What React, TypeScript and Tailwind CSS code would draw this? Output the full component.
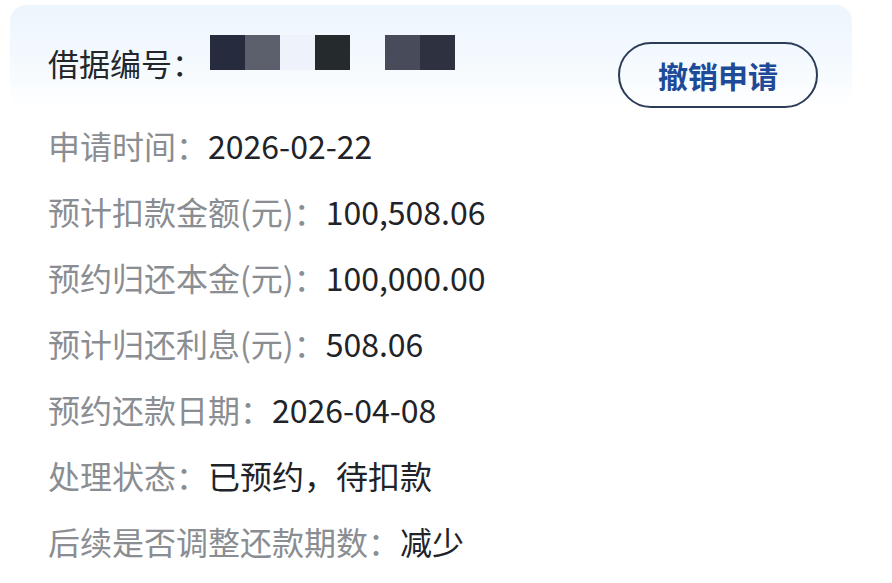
const rows: Array<{ label: string; value: string }> = [
  { label: '申请时间：', value: '2026-02-22' },
  { label: '预计扣款金额(元)：', value: '100,508.06' },
  { label: '预约归还本金(元)：', value: '100,000.00' },
  { label: '预计归还利息(元)：', value: '508.06' },
  { label: '预约还款日期：', value: '2026-04-08' },
  { label: '处理状态：', value: '已预约，待扣款' },
  { label: '后续是否调整还款期数：', value: '减少' },
]

// pixelated redaction over the loan number
const blocks = ['bg-[#262b3d]', 'bg-[#5b606c]', 'bg-[#eef2fb]', 'bg-[#252a2c]', 'bg-transparent', 'bg-[#474b5a]', 'bg-[#2d3140]']

export default function App() {
  return (
    <div
      className="w-[892px] h-[583px] bg-white overflow-hidden"
      style={{ fontFamily: '"Noto Sans CJK SC", "Noto Sans", sans-serif' }}
    >
      <div className="ml-[10px] w-[842px] mt-[5px] rounded-[16px] bg-gradient-to-b from-[#edf6fd] via-[#f3f9fe] to-white pl-[38px] pr-[34px] pt-[25px] flex justify-between items-start">
        <div className="flex items-start h-[66px]">
          <span className="text-[31px] leading-[66px] text-[#23262b]">借据编号：</span>
          <div className="flex ml-[7px] mt-[5px]">
            {blocks.map((b, i) => (
              <div key={i} className={`w-[35px] h-[35px] ${b}`} />
            ))}
          </div>
        </div>
        <button className="mt-[12px] w-[200px] h-[66px] rounded-full border-2 border-[#2c3b57] text-[30px] font-bold text-[#1f4a98]">
          撤销申请
        </button>
      </div>
      <div className="pl-[48px] mt-[4px] flex flex-col">
        {rows.map((r) => (
          <div key={r.label} className="h-[66px] flex items-center text-[32px]">
            <span className="text-[#8a8d91]">{r.label}</span>
            <span className="text-[#212328]">{r.value}</span>
          </div>
        ))}
      </div>
    </div>
  )
}
